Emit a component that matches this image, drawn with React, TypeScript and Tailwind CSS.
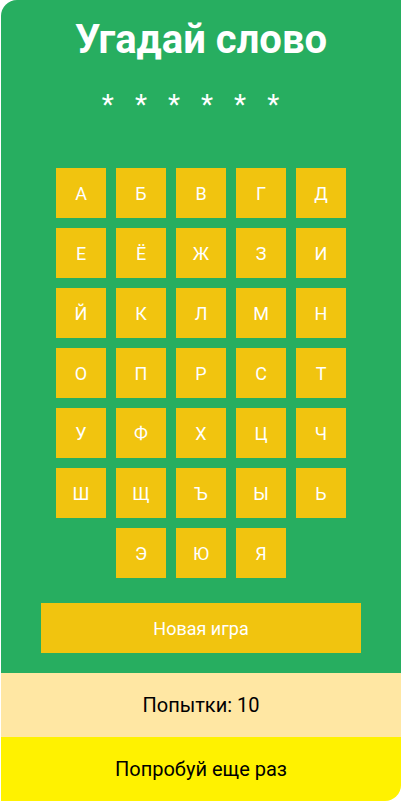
import React, { useState } from 'react';

const letters = [
  'А', 'Б', 'В', 'Г', 'Д',
  'Е', 'Ё', 'Ж', 'З', 'И',
  'Й', 'К', 'Л', 'М', 'Н',
  'О', 'П', 'Р', 'С', 'Т',
  'У', 'Ф', 'Х', 'Ц', 'Ч',
  'Ш', 'Щ', 'Ъ', 'Ы', 'Ь',
  'Э', 'Ю', 'Я'
];

export default function App() {
  const [attempts] = useState(10);
  const word = '******';

  return (
    <div className="ml-px w-[400px] overflow-hidden rounded-tl-[16px] rounded-br-[16px] font-['Roboto',sans-serif]">
      <div className="bg-[#27ae60] pt-[16px] pb-[20px] flex flex-col items-center">
        <h1 className="text-[40px] leading-[47px] font-bold text-white">Угадай слово</h1>

        {/* Hidden word */}
        <div className="mt-[25px] flex text-[28px] leading-[33px] text-white">
          {word.split('').map((ch, i) => (
            <span key={i} className="mr-[21px]">{ch}</span>
          ))}
        </div>

        {/* Letters */}
        <div className="mt-[42px] w-[300px] flex flex-wrap justify-center">
          {letters.map((l) => (
            <button
              key={l}
              type="button"
              className="m-[5px] w-[50px] h-[50px] bg-[#f1c40f] text-white text-[18px] flex items-center justify-center"
            >
              {l}
            </button>
          ))}
        </div>

        <button
          type="button"
          className="mt-[20px] w-[320px] h-[50px] bg-[#f1c40f] text-white text-[18px] flex items-center justify-center"
        >
          Новая игра
        </button>
      </div>

      <div className="h-[64px] bg-[#ffe7a3] flex items-center justify-center text-[20px] text-black">
        Попытки: {attempts}
      </div>
      <div className="h-[64px] bg-[#fff200] flex items-center justify-center text-[20px] text-black">
        Попробуй еще раз
      </div>
    </div>
  );
}
